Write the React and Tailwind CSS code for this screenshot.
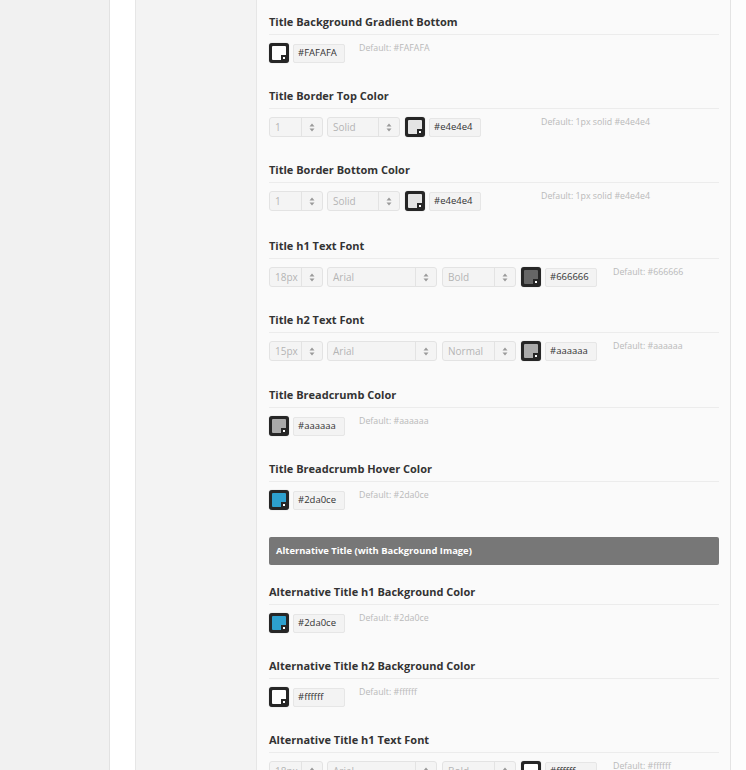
import React from "react";

const font = { fontFamily: '"Open Sans", "Liberation Sans", sans-serif' };

function Swatch({ color }) {
  return (
    <div className="relative w-[20px] h-[20px] shrink-0 rounded-[3px] bg-[#262626] p-[3px] shadow-[0_0_1px_rgba(0,0,0,0.4)]">
      <div className="w-full h-full rounded-[1px]" style={{ background: color }} />
      <div className="absolute right-[3px] bottom-[3px] w-[5px] h-[5px] bg-[#262626] flex items-center justify-center">
        <div className="w-[2px] h-[2px] bg-white" />
      </div>
    </div>
  );
}

function HexInput({ value }) {
  return (
    <div className="w-[52px] h-[19px] shrink-0 rounded-[2px] border border-[#e6e6e6] bg-[#f3f3f3] pl-[4px] flex items-center text-[9.5px] text-[#333]">
      {value}
    </div>
  );
}

function Arrows() {
  return (
    <svg width="6" height="9" viewBox="0 0 6 9">
      <path d="M3 0.5 L5.5 3.5 L0.5 3.5 Z" fill="#9a9a9a" />
      <path d="M3 8.5 L5.5 5.5 L0.5 5.5 Z" fill="#9a9a9a" />
    </svg>
  );
}

function Select({ w, label }) {
  return (
    <div
      className="h-[20px] shrink-0 rounded-[3px] border border-[#e3e3e3] bg-[#f4f4f4] flex items-stretch text-[10px] text-[#b5b5b5]"
      style={{ width: w }}
    >
      <div className="flex-1 flex items-center pl-[5px]">{label}</div>
      <div className="w-[21px] border-l border-[#e3e3e3] flex items-center justify-center">
        <Arrows />
      </div>
    </div>
  );
}

function Def({ text, ml }) {
  return (
    <div className="self-start mt-[-1px] text-[8.8px] text-[#b9b9b9] whitespace-nowrap" style={{ marginLeft: ml }}>
      {text}
    </div>
  );
}

function Section({ title, children, extra = 0 }) {
  return (
    <div className="mb-[25px]" style={{ marginTop: extra }}>
      <div className="h-[16px] leading-[16px] text-[11px] font-bold text-[#333]">{title}</div>
      <div className="mt-[4px] border-b border-[#ececec]" />
      <div className="mt-[8px] h-[20px] flex items-center">{children}</div>
    </div>
  );
}

function ColorRow({ color, hex, def }) {
  return (
    <>
      <Swatch color={color} />
      <div className="ml-[4px]">
        <HexInput value={hex} />
      </div>
      <Def text={def} ml="14px" />
    </>
  );
}

function BorderRow({ hex }) {
  return (
    <>
      <Select w="54px" label="1" />
      <div className="ml-[4px]"><Select w="73px" label="Solid" /></div>
      <div className="ml-[5px]"><Swatch color={hex} /></div>
      <div className="ml-[4px]"><HexInput value={hex} /></div>
      <Def text={`Default: 1px solid ${hex}`} ml="60px" />
    </>
  );
}

function FontRow({ size, weight, color, hex }) {
  return (
    <>
      <Select w="54px" label={size} />
      <div className="ml-[4px]"><Select w="110px" label="Arial" /></div>
      <div className="ml-[5px]"><Select w="74px" label={weight} /></div>
      <div className="ml-[5px]"><Swatch color={color} /></div>
      <div className="ml-[4px]"><HexInput value={hex} /></div>
      <Def text={`Default: ${hex}`} ml="16px" />
    </>
  );
}

export default function App() {
  return (
    <div className="w-[746px] h-[770px] overflow-hidden flex bg-[#fdfdfd]" style={font}>
      <div className="w-[110px] shrink-0 bg-[#f1f1f1] border-r border-[#e2e2e2] shadow-[1px_0_2px_rgba(0,0,0,0.06)]" />
      <div className="w-[26px] shrink-0 bg-white border-r border-[#e6e6e6]" />
      <div className="w-[121px] shrink-0 bg-[#f3f3f3] border-r border-[#e6e6e6]" />
      <div className="w-[474px] shrink-0 bg-[#fafafa] border-r border-[#e4e4e4] pl-[12px] pr-[11px] pt-[14px] flex flex-col">
        <Section title="Title Background Gradient Bottom">
          <ColorRow color="#ffffff" hex="#FAFAFA" def="Default: #FAFAFA" />
        </Section>
        <Section title="Title Border Top Color">
          <BorderRow hex="#e4e4e4" />
        </Section>
        <Section title="Title Border Bottom Color">
          <BorderRow hex="#e4e4e4" />
        </Section>
        <Section title="Title h1 Text Font" extra="2px">
          <FontRow size="18px" weight="Bold" color="#666666" hex="#666666" />
        </Section>
        <Section title="Title h2 Text Font">
          <FontRow size="15px" weight="Normal" color="#aaaaaa" hex="#aaaaaa" />
        </Section>
        <Section title="Title Breadcrumb Color" extra="1px">
          <ColorRow color="#aaaaaa" hex="#aaaaaa" def="Default: #aaaaaa" />
        </Section>
        <Section title="Title Breadcrumb Hover Color">
          <ColorRow color="#2da0ce" hex="#2da0ce" def="Default: #2da0ce" />
        </Section>
        <div className="mt-[2px] h-[28px] shrink-0 rounded-[2px] bg-[#777777] flex items-center pl-[7px] text-[9.4px] font-bold text-white">
          Alternative Title (with Background Image)
        </div>
        <div className="h-[19px] shrink-0" />
        <Section title="Alternative Title h1 Background Color">
          <ColorRow color="#2da0ce" hex="#2da0ce" def="Default: #2da0ce" />
        </Section>
        <Section title="Alternative Title h2 Background Color">
          <ColorRow color="#ffffff" hex="#ffffff" def="Default: #ffffff" />
        </Section>
        <Section title="Alternative Title h1 Text Font">
          <FontRow size="18px" weight="Bold" color="#ffffff" hex="#ffffff" />
        </Section>
      </div>
      <div className="flex-1 bg-[#fdfdfd]" />
    </div>
  );
}
